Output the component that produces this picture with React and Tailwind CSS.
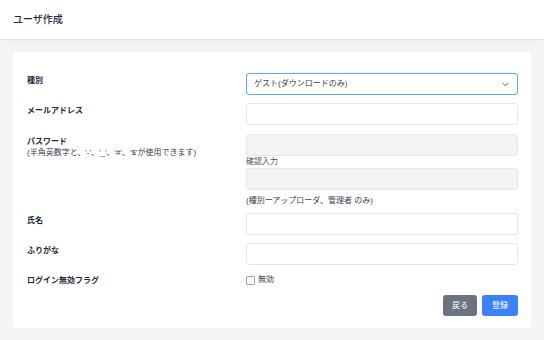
import { useState } from "react";

const font = { fontFamily: '"Liberation Sans", "Noto Sans CJK JP", sans-serif' };

function Label({ children }) {
  return (
    <div className="pt-[2px] text-[8px] leading-[11px] font-bold text-[#1f2937]">
      {children}
    </div>
  );
}

function TextInput({ disabled }) {
  return (
    <input
      type="text"
      disabled={disabled}
      className={`block w-full h-[22px] rounded-[3px] border border-[#e5e7eb] px-2 text-[8px] outline-none ${
        disabled ? "bg-[#f3f4f6]" : "bg-white"
      }`}
    />
  );
}

export default function App() {
  const [role, setRole] = useState("guest");
  const [disabled, setDisabled] = useState(false);

  return (
    <div className="min-h-[340px] bg-[#f3f4f6] text-[#374151]" style={font}>
      {/* header */}
      <div className="h-[40px] bg-white border-b border-[#e5e7eb] shadow-[0_1px_2px_rgba(0,0,0,0.03)] flex items-center px-[13px]">
        <h1 className="text-[10px] font-medium text-[#1f2937]">ユーザ作成</h1>
      </div>

      <div className="px-[13px] pt-[12px]">
        <div className="bg-white rounded-[4px] pt-[21px] pb-[12px] pl-[14px] pr-[13px]">
          <div className="grid grid-cols-[219px_1fr]">
            {/* 種別 */}
            <Label>種別</Label>
            <div className="relative">
              <select
                value={role}
                onChange={(e) => setRole(e.target.value)}
                className="block w-full h-[22px] appearance-none rounded-[3px] border border-[#60a5fa] bg-white pl-[7px] text-[8px] text-[#374151] outline-none"
              >
                <option value="guest">ゲスト(ダウンロードのみ)</option>
                <option value="uploader">アップローダ</option>
                <option value="admin">管理者</option>
              </select>
              <svg
                className="pointer-events-none absolute right-[9px] top-[9px]"
                width="7"
                height="5"
                viewBox="0 0 7 5"
                fill="none"
                stroke="#6b7280"
                strokeWidth="1"
              >
                <path d="M0.8 1 L3.5 3.8 L6.2 1" />
              </svg>
            </div>

            {/* メールアドレス */}
            <div className="mt-[8px]">
              <Label>メールアドレス</Label>
            </div>
            <div className="mt-[8px]">
              <TextInput />
            </div>

            {/* パスワード */}
            <div className="mt-[9px]">
              <Label>
                パスワード
                <div className="font-normal text-[#374151]">
                  (半角英数字と、'-'、'_'、'#'、'$'が使用できます)
                </div>
              </Label>
            </div>
            <div className="mt-[9px]">
              <TextInput disabled />
              <div className="text-[8px] leading-[12px] text-[#4b5563]">確認入力</div>
              <TextInput disabled />
              <div className="mt-[5px] text-[8px] leading-[12px] text-[#374151]">
                (種別ーアップローダ、管理者 のみ)
              </div>
            </div>

            {/* 氏名 */}
            <div className="mt-[6px]">
              <Label>氏名</Label>
            </div>
            <div className="mt-[6px]">
              <TextInput />
            </div>

            {/* ふりがな */}
            <div className="mt-[8px]">
              <Label>ふりがな</Label>
            </div>
            <div className="mt-[8px]">
              <TextInput />
            </div>

            {/* ログイン無効フラグ */}
            <div className="mt-[9px] flex items-center h-[12px]">
              <div className="text-[8px] leading-[11px] font-bold text-[#1f2937]">
                ログイン無効フラグ
              </div>
            </div>
            <label className="mt-[9px] flex items-center h-[12px] gap-[3px] cursor-pointer">
              <input
                type="checkbox"
                checked={disabled}
                onChange={(e) => setDisabled(e.target.checked)}
                className="appearance-none w-[9px] h-[9px] border border-[#9ca3af] rounded-[1px] bg-white checked:bg-[#3b82f6] checked:border-[#3b82f6]"
              />
              <span className="text-[8px] text-[#374151]">無効</span>
            </label>
          </div>

          <div className="mt-[9px] flex justify-end gap-[5px]">
            <button className="w-[34px] h-[21px] rounded-[3px] bg-[#6b7280] text-white text-[8px]">
              戻る
            </button>
            <button className="w-[36px] h-[21px] rounded-[3px] bg-[#3b82f6] text-white text-[8px]">
              登録
            </button>
          </div>
        </div>
      </div>
    </div>
  );
}
